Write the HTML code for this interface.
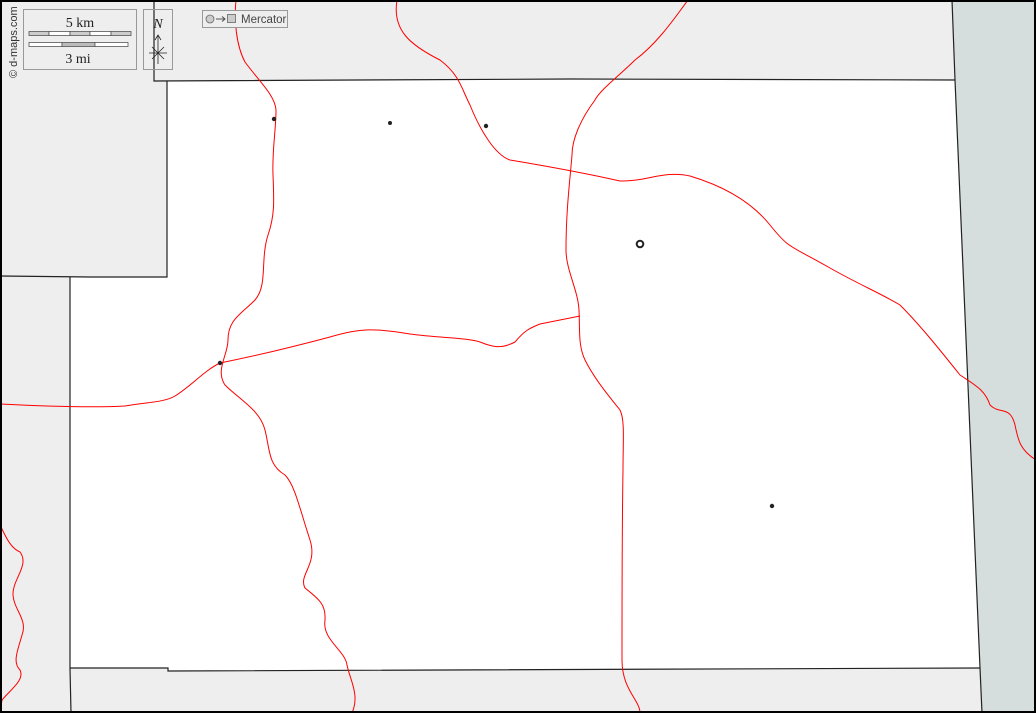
<!DOCTYPE html>
<html><head><meta charset="utf-8"><style>
html,body{margin:0;padding:0;width:1036px;height:713px;overflow:hidden;background:#eee}
svg{display:block}
</style></head><body>
<svg width="1036" height="713" viewBox="0 0 1036 713" xmlns="http://www.w3.org/2000/svg">
<rect width="1036" height="713" fill="#eeeeee"/>
<polygon points="952,0 1036,0 1036,713 982,713" fill="#d5dedd"/>
<polygon points="167,81 571,79 955,80 980,668 168,671 168,668 70,668 70,277 90,277 167,277" fill="#ffffff"/>
<g fill="none" stroke="#222" stroke-width="1.2">
<polyline points="154,0 154,81 571,79 955,80"/>
<polyline points="952,0 955,80 980,668 982,713"/>
<polyline points="167,81 167,277 90,277 0,276"/>
<polyline points="70,277 70,668 71,713"/>
<polyline points="70,668 168,668 168,671 980,668"/>
</g>
<g fill="none" stroke="#ff0000" stroke-width="1">
<path d="M236,0 C234,20 236,45 245,62 C258,80 275,95 276,110 C276,130 272,150 273,175 C274,200 275,215 268,235 C260,260 268,285 255,300 C240,315 228,320 228,340 C228,355 215,370 225,385 C240,400 260,410 265,430 C270,450 268,465 285,475 C295,485 300,510 310,540 C318,565 298,575 305,588 C320,600 326,605 325,620 C322,640 345,650 347,665 C350,680 360,695 352,713"/>
<path d="M397,0 C392,30 410,45 440,60 C460,75 462,90 470,105 C480,130 495,155 510,160 C540,165 580,172 620,181 C645,182 665,170 690,176 C720,185 750,200 770,225 C790,250 790,245 830,268 C860,285 880,293 900,305 C920,325 940,350 960,375 C975,385 985,390 990,405 C1000,415 1010,405 1015,425 C1018,440 1020,450 1036,460"/>
<path d="M688,0 C670,25 655,45 635,60 C620,75 600,90 595,100 C580,120 572,140 572,155 C570,180 566,210 566,250 C566,270 578,290 579,310 C580,330 578,345 585,360 C595,380 612,400 620,410 C625,420 623,440 623,470 C622,530 622,600 622,660 C622,690 640,700 640,713"/>
<path d="M0,404 C40,406 90,408 125,406 C150,402 165,402 175,396 C190,387 205,370 220,363 C260,355 300,345 330,337 C360,328 375,328 410,334 C440,338 470,338 480,342 C490,346 500,350 515,342 C525,330 530,328 540,324 L580,316"/>
<path d="M0,525 C5,535 10,548 20,552 C30,565 12,580 13,595 C14,610 28,620 22,635 C18,650 12,662 20,670 C25,680 10,690 2,700 L0,713"/>
</g>
<g fill="#222">
<circle cx="274" cy="119" r="2.2"/><circle cx="390" cy="123" r="2"/><circle cx="486" cy="126" r="2.2"/>
<circle cx="220" cy="363" r="2.2"/><circle cx="772" cy="506" r="2.2"/>
</g>
<circle cx="640" cy="244" r="3.3" fill="#fff" stroke="#222" stroke-width="2"/>
<rect x="23.5" y="9.5" width="113" height="60" fill="#eee" stroke="#999"/>
<text x="80" y="27" font-family="Liberation Serif,serif" font-size="14" text-anchor="middle" fill="#222">5 km</text>
<g stroke="#555" stroke-width="0.8">
<rect x="29" y="31.5" width="20" height="4" fill="#ccc"/><rect x="49" y="31.5" width="21" height="4" fill="#fff"/><rect x="70" y="31.5" width="20" height="4" fill="#ccc"/><rect x="90" y="31.5" width="21" height="4" fill="#fff"/><rect x="111" y="31.5" width="20" height="4" fill="#ccc"/>
<rect x="29" y="42.5" width="33" height="4" fill="#fff"/><rect x="62" y="42.5" width="33" height="4" fill="#bbb"/><rect x="95" y="42.5" width="33" height="4" fill="#fff"/>
</g>
<text x="78" y="63" font-family="Liberation Serif,serif" font-size="14" text-anchor="middle" fill="#222">3 mi</text>
<rect x="143.5" y="9.5" width="29" height="60" fill="none" stroke="#999"/>
<text x="158" y="28" font-family="Liberation Serif,serif" font-style="italic" font-size="14" text-anchor="middle" fill="#222">N</text>
<g stroke="#222" stroke-width="0.8" fill="none">
<line x1="158" y1="36" x2="158" y2="64"/><polyline points="155,40 158,35 161,40"/>
<line x1="149" y1="53" x2="167" y2="53"/><line x1="152" y1="47" x2="164" y2="59"/><line x1="164" y1="47" x2="152" y2="59"/>
</g>
<rect x="202.5" y="10.5" width="85" height="17" fill="#eee" stroke="#999"/>
<circle cx="210" cy="19" r="4" fill="#ccc" stroke="#666" stroke-width="0.8"/>
<g stroke="#444" stroke-width="0.9" fill="none"><line x1="216" y1="19" x2="225" y2="19"/><polyline points="222,16.5 225,19 222,21.5"/></g>
<rect x="227.5" y="14.5" width="8" height="8" fill="#ccc" stroke="#666" stroke-width="0.8"/>
<text x="241" y="23" font-family="Liberation Sans,sans-serif" font-size="11.5" fill="#444">Mercator</text>
<text transform="translate(17,78) rotate(-90)" font-family="Liberation Sans,sans-serif" font-size="11" fill="#333">© d-maps.com</text>
<rect x="1" y="1" width="1034" height="711" fill="none" stroke="#000" stroke-width="2"/>
</svg>
</body></html>
